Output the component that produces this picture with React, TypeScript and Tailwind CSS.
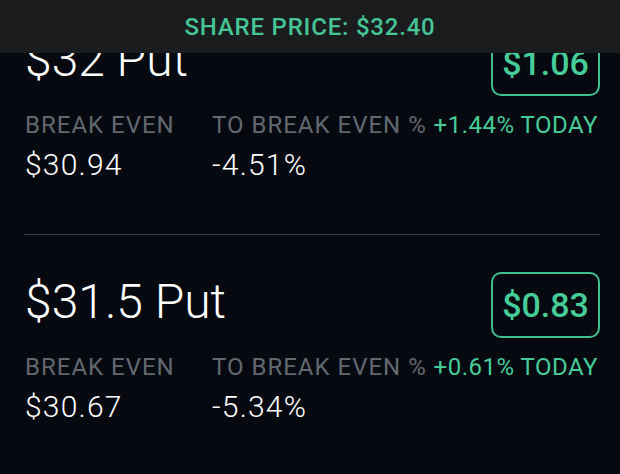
import React from "react";

type Put = {
  strike: string;
  price: string;
  breakEven: string;
  toBreakEven: string;
  today: string;
};

const puts: Put[] = [
  { strike: "$32 Put", price: "$1.06", breakEven: "$30.94", toBreakEven: "-4.51%", today: "+1.44% TODAY" },
  { strike: "$31.5 Put", price: "$0.83", breakEven: "$30.67", toBreakEven: "-5.34%", today: "+0.61% TODAY" },
];

function PutRow({ put }: { put: Put }) {
  return (
    <div className="border-b border-[#3a4048] pt-[37px] pb-[52px]">
      {/* title + price box */}
      <div className="flex items-start justify-between">
        <div className="mt-[6px] pl-[1px] text-[48px] leading-[48px] font-light text-white">{put.strike}</div>
        <div className="flex h-[66px] w-[109px] items-center justify-center rounded-[10px] border-2 border-[#3fc08f] text-[34px] font-medium text-[#45cc98]">
          {put.price}
        </div>
      </div>

      {/* labels */}
      <div className="mt-[15px] flex text-[24px] leading-[28px] font-normal tracking-[1px]">
        <span className="w-[188px] pl-[1px] text-[#62686f]">BREAK EVEN</span>
        <span className="text-[#62686f]">TO BREAK EVEN %</span>
        <span className="mr-[2px] ml-auto tracking-[0.5px] text-[#45cc98]">{put.today}</span>
      </div>

      {/* values */}
      <div className="mt-[9px] flex text-[30px] leading-[34px] font-light tracking-[1.2px] text-white">
        <span className="w-[188px] pl-[1px]">{put.breakEven}</span>
        <span>{put.toBreakEven}</span>
      </div>
    </div>
  );
}

export default function App() {
  return (
    <div
      className="relative h-[474px] w-[620px] overflow-hidden bg-[#060a10]"
      style={{ fontFamily: "Roboto, 'Noto Sans', sans-serif" }}
    >
      <div className="-mt-[7px] pl-[24px] pr-[20px]">
        {puts.map((p) => (
          <PutRow key={p.strike} put={p} />
        ))}
      </div>

      {/* sticky share price header over the scrolled list */}
      <div className="absolute inset-x-0 top-0 flex h-[53px] items-center justify-center bg-[#1b1c1e] pt-[1px] text-[24px] font-medium tracking-[0.8px] text-[#45c495]">
        SHARE PRICE: $32.40
      </div>
    </div>
  );
}
